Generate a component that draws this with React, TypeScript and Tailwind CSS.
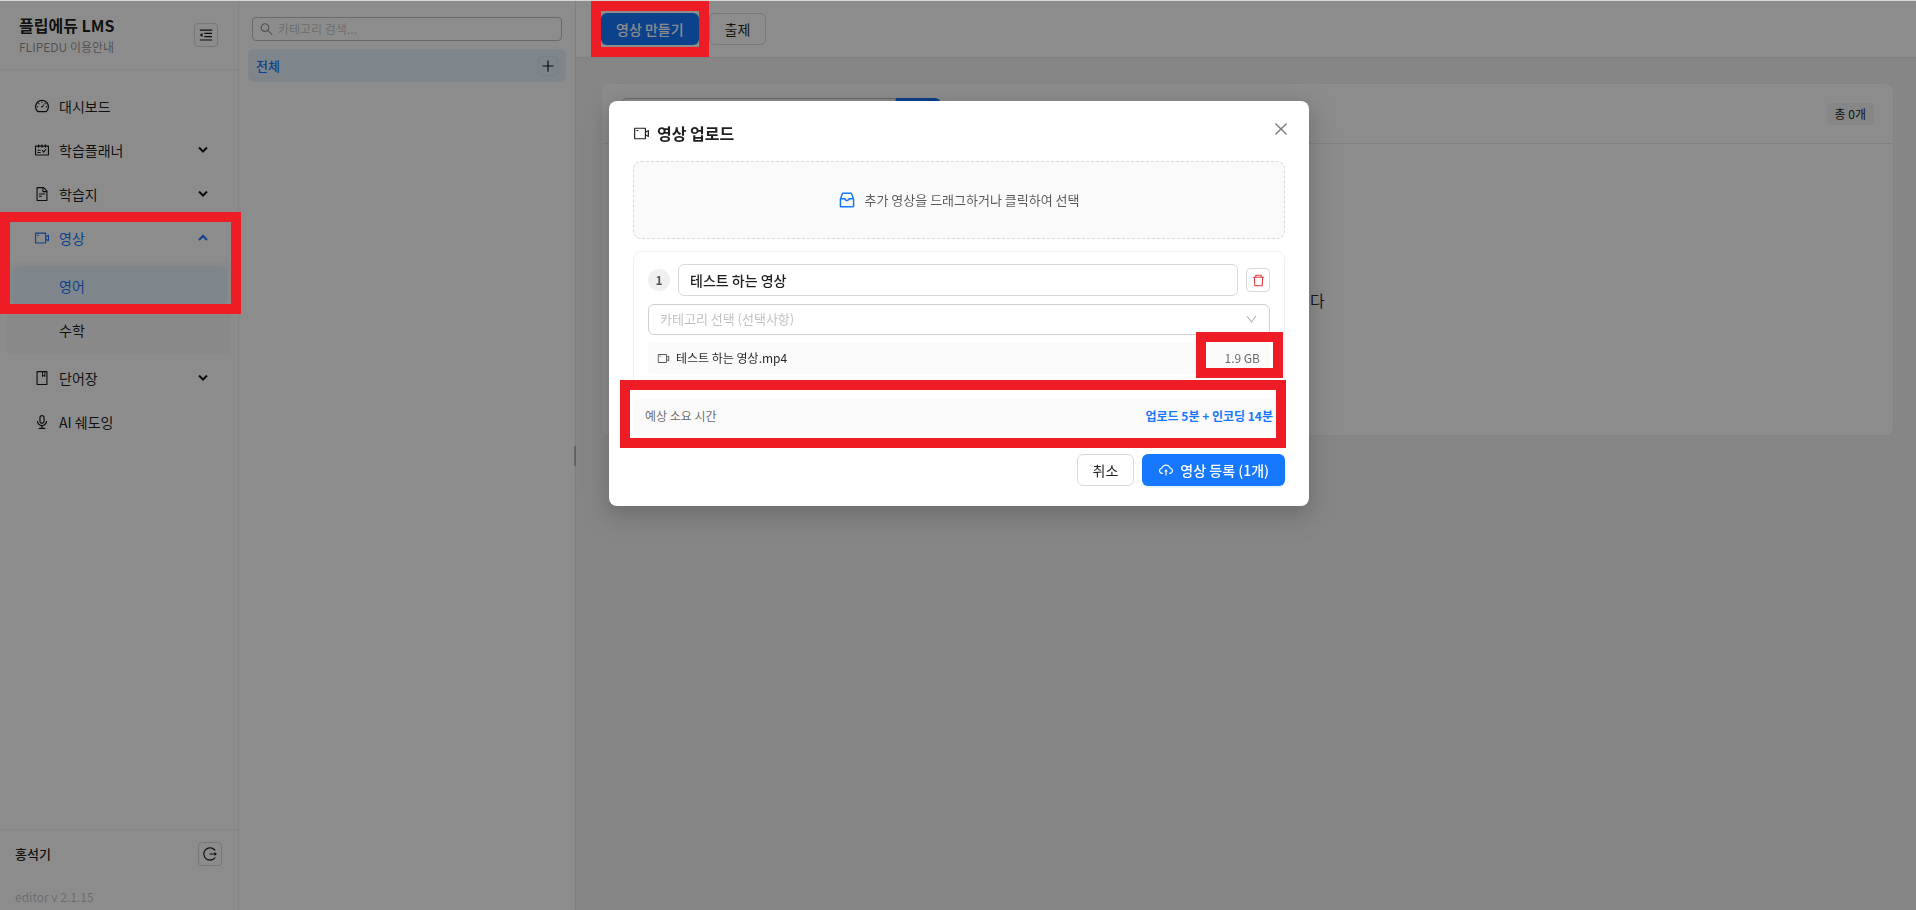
import { useState } from "react";
import type { ReactNode } from "react";
import {
  AiOutlineAudio,
  AiOutlineBook,
  AiOutlineClose,
  AiOutlineCloudUpload,
  AiOutlineDashboard,
  AiOutlineDelete,
  AiOutlineDown,
  AiOutlineFileText,
  AiOutlineInbox,
  AiOutlineLogout,
  AiOutlineMenuFold,
  AiOutlinePlus,
  AiOutlineSchedule,
  AiOutlineSearch,
  AiOutlineVideoCamera,
} from "react-icons/ai";

interface MenuEntry {
  label: string;
  icon: ReactNode;
  expandable?: boolean;
}

const TOP_MENU: MenuEntry[] = [
  { label: "대시보드", icon: <AiOutlineDashboard size={16} /> },
  { label: "학습플래너", icon: <AiOutlineSchedule size={16} />, expandable: true },
  { label: "학습지", icon: <AiOutlineFileText size={16} />, expandable: true },
];

const BOTTOM_MENU: MenuEntry[] = [
  { label: "단어장", icon: <AiOutlineBook size={16} />, expandable: true },
  { label: "AI 쉐도잉", icon: <AiOutlineAudio size={16} /> },
];

const SUBJECTS = ["영어", "수학"];

// Red frame that points out a part of the screen, drawn above the modal mask
function Highlight({ className }: { className: string }) {
  return (
    <span
      aria-hidden="true"
      className={`pointer-events-none absolute z-50 border-10 border-[#ee1c25] ${className}`}
    />
  );
}

function Chevron({ up = false }: { up?: boolean }) {
  return (
    <svg width="10" height="10" viewBox="0 0 10 10" fill="none" stroke="currentColor" strokeWidth="2">
      <path d={up ? "M1 7l4-4 4 4" : "M1 2.5l4 4 4-4"} />
    </svg>
  );
}

function MenuItem({ entry, open = false }: { entry: MenuEntry; open?: boolean }) {
  return (
    <button
      type="button"
      className={`flex h-10 w-full items-center gap-[9px] rounded-lg pr-[23px] pl-[27px] text-left text-sm ${
        open ? "text-[#1677ff]" : "text-black/90"
      }`}
    >
      {entry.icon}
      <span className="flex-1">{entry.label}</span>
      {entry.expandable && <Chevron up={open} />}
    </button>
  );
}

function Sidebar() {
  const [subject, setSubject] = useState("영어");
  return (
    <aside className="flex w-[239px] shrink-0 flex-col border-r border-[#f0f0f0] bg-white">
      <div className="flex h-[69px] items-center justify-between border-b border-[#f0f0f0] pr-5 pl-[19px]">
        <div>
          <h1 className="text-base leading-5 font-bold">플립에듀 LMS</h1>
          <p className="mt-1 text-xs leading-4 text-black/45">FLIPEDU 이용안내</p>
        </div>
        <button
          type="button"
          aria-label="메뉴 접기"
          className="flex size-6 items-center justify-center rounded border border-[#d9d9d9]"
        >
          <AiOutlineMenuFold size={16} />
        </button>
      </div>

      <nav className="flex flex-1 flex-col gap-1 px-[7px] pt-4">
        {TOP_MENU.map(entry => (
          <MenuItem key={entry.label} entry={entry} />
        ))}
        <div className="relative">
          <MenuItem
            open
            entry={{ label: "영상", icon: <AiOutlineVideoCamera size={16} />, expandable: true }}
          />
          <div className="mt-1 flex flex-col gap-1 rounded bg-[#fafafa] p-1">
            {SUBJECTS.map(name => (
              <button
                key={name}
                type="button"
                onClick={() => setSubject(name)}
                className={`h-10 rounded-lg pl-12 text-left text-sm ${
                  name === subject ? "bg-[#e6f4ff] text-[#1677ff]" : "text-black/90"
                }`}
              >
                {name}
              </button>
            ))}
          </div>
          <Highlight className="-top-1.5 -right-2.5 -left-[7px] h-[102px]" />
        </div>
        {BOTTOM_MENU.map(entry => (
          <MenuItem key={entry.label} entry={entry} />
        ))}
      </nav>

      <div className="flex flex-col gap-[23px] border-t border-[#f0f0f0] pt-3 pr-4 pb-[5px] pl-[15px]">
        <div className="flex items-center justify-between">
          <span className="text-[13px] font-medium">홍석기</span>
          <button
            type="button"
            aria-label="로그아웃"
            className="flex size-6 items-center justify-center rounded border border-[#d9d9d9]"
          >
            <AiOutlineLogout size={16} />
          </button>
        </div>
        <p className="text-xs leading-4 text-black/25">editor v 2.1.15</p>
      </div>
    </aside>
  );
}

function CategoryPanel() {
  return (
    <section className="relative flex w-[337px] shrink-0 flex-col gap-2 border-r border-[#e5e5e5] bg-white px-[9px] pt-4">
      <label className="mx-1 flex h-6 items-center gap-1 rounded border border-[#bfbfbf] px-1.5 text-black/40">
        <AiOutlineSearch size={16} />
        <input
          type="search"
          aria-label="카테고리 검색"
          placeholder="카테고리 검색..."
          className="w-full bg-transparent text-xs outline-none placeholder:text-black/25"
        />
      </label>
      <div className="flex h-[33px] items-center justify-between rounded-md bg-[#e6f4ff] px-2">
        <button type="button" className="text-[13px] font-medium text-[#1677ff]">
          전체
        </button>
        <button
          type="button"
          aria-label="카테고리 추가"
          className="flex size-5 items-center justify-center rounded border border-black/5"
        >
          <AiOutlinePlus size={16} className="shrink-0" />
        </button>
      </div>
      {/* resize grip on the panel edge */}
      <div className="absolute top-1/2 -right-px h-5 w-0.5 -translate-y-1/2 bg-black/25" />
    </section>
  );
}

function MainArea() {
  return (
    <main className="flex min-w-0 flex-1 flex-col bg-[#f5f5f5]">
      <div className="flex h-[57px] items-center gap-2.5 border-b border-[#ebebeb] bg-white px-[25px]">
        <div className="relative">
          <button
            type="button"
            className="h-8 rounded-md bg-[#1677ff] px-[15px] text-sm font-medium text-white"
          >
            영상 만들기
          </button>
          <Highlight className="-inset-x-2.5 -inset-y-3" />
        </div>
        <button type="button" className="h-8 rounded-md border border-[#d9d9d9] px-[15px] text-sm">
          출제
        </button>
      </div>

      <div className="py-[25px] pr-[22px] pl-[25px]">
        <div className="rounded-lg border border-[#f0f0f0] bg-white">
          <div className="flex h-[60px] items-center justify-between border-b border-[#ebebeb] px-[19px]">
            <div className="flex">
              <input
                type="text"
                aria-label="영상 검색"
                className="h-8 w-[275px] rounded-l-md border border-[#bfbfbf] px-3 text-sm outline-none"
              />
              <button
                type="button"
                aria-label="검색"
                className="flex h-8 w-[45px] items-center justify-center rounded-r-md bg-[#1677ff] text-white"
              >
                <AiOutlineSearch size={16} />
              </button>
            </div>
            <span className="rounded bg-[#f5f5f5] px-2 text-xs leading-[22px]">총 0개</span>
          </div>
          <p className="flex h-[291px] items-center justify-center pt-5 text-base text-black/85">
            등록된 영상이 없습니다
          </p>
        </div>
      </div>
    </main>
  );
}

function UploadModal() {
  const [title, setTitle] = useState("테스트 하는 영상");
  return (
    <div className="fixed inset-x-0 top-px bottom-0 z-40 flex items-start justify-center bg-black/45 pt-[100px] pl-0.5">
      <div
        role="dialog"
        aria-label="영상 업로드"
        className="relative w-[700px] rounded-lg bg-white px-6 py-5 shadow-[0_6px_16px_rgba(0,0,0,0.08),0_9px_28px_8px_rgba(0,0,0,0.12)]"
      >
        <div className="flex h-6 items-center gap-[7px] text-black/88">
          <AiOutlineVideoCamera size={17} />
          <h2 className="text-base font-bold">영상 업로드</h2>
        </div>
        <button
          type="button"
          aria-label="닫기"
          className="absolute top-3 right-3 flex size-8 items-center justify-center text-black/50"
        >
          <AiOutlineClose size={18} />
        </button>

        <button
          type="button"
          className="mt-4 flex h-[78px] w-full items-center justify-center gap-2 rounded-lg border border-dashed border-[#d9d9d9] bg-[#fafafa] pr-0.5 text-[13px] text-black/65"
        >
          <AiOutlineInbox size={20} className="text-[#1677ff]" />
          추가 영상을 드래그하거나 클릭하여 선택
        </button>

        <div className="mt-3 flex flex-col gap-2 rounded-lg border border-[#f0f0f0] px-3.5 py-3">
          <div className="flex items-center gap-2">
            <span className="flex size-[22px] items-center justify-center rounded-full bg-[#f0f0f0] text-xs font-bold text-black/65">
              1
            </span>
            <input
              type="text"
              aria-label="영상 제목"
              value={title}
              onChange={e => setTitle(e.target.value)}
              className="h-8 min-w-0 flex-1 rounded-md border border-[#d9d9d9] px-[11px] text-sm font-medium text-black/88 outline-none"
            />
            <button
              type="button"
              aria-label="삭제"
              className="flex size-6 items-center justify-center rounded border border-[#d9d9d9] text-[#e03a3e]"
            >
              <AiOutlineDelete size={15} />
            </button>
          </div>
          <div className="relative">
            <select
              aria-label="카테고리 선택"
              className="h-[31px] w-full appearance-none rounded-md border border-[#d0d0d0] bg-white px-[11px] pb-0.5 text-[13px] text-black/25 outline-none"
            >
              <option>카테고리 선택 (선택사항)</option>
            </select>
            <AiOutlineDown
              size={13}
              className="pointer-events-none absolute top-[9px] right-3 text-black/30"
            />
          </div>
          <div className="relative flex h-[31px] items-center gap-1.5 rounded bg-[#fafafa] px-[9px] pb-px text-xs">
            <AiOutlineVideoCamera size={13} className="text-black/65" />
            <span className="flex-1 text-black/85">테스트 하는 영상.mp4</span>
            <span className="pr-px text-black/60">1.9 GB</span>
            <Highlight className="-top-[11px] -right-[13px] h-[46px] w-[87px]" />
          </div>
        </div>

        <div className="relative mt-3 flex h-[35px] items-center justify-between rounded-md bg-[#fafafa] px-3 pb-px text-xs">
          <span className="text-black/60">예상 소요 시간</span>
          <strong className="font-bold text-[#1677ff]">업로드 5분 + 인코딩 14분</strong>
          <Highlight className="-top-[19px] -right-px -left-[13px] h-[68px]" />
        </div>

        <div className="mt-5 flex justify-end gap-2">
          <button
            type="button"
            className="h-8 rounded-md border border-[#d9d9d9] px-[15px] text-sm text-black/88"
          >
            취소
          </button>
          <button
            type="button"
            className="flex h-8 items-center gap-1.5 rounded-md bg-[#1677ff] px-4 text-sm font-medium text-white shadow-[0_2px_0_rgba(5,145,255,0.1)]"
          >
            <AiOutlineCloudUpload size={16} />
            영상 등록 (1개)
          </button>
        </div>
      </div>
    </div>
  );
}

export default function App() {
  return (
    <div className="flex h-screen border-t border-[#d5d7d6] font-['Noto_Sans_CJK_KR','Noto_Sans',sans-serif] text-black/90">
      <Sidebar />
      <CategoryPanel />
      <MainArea />
      <UploadModal />
    </div>
  );
}
